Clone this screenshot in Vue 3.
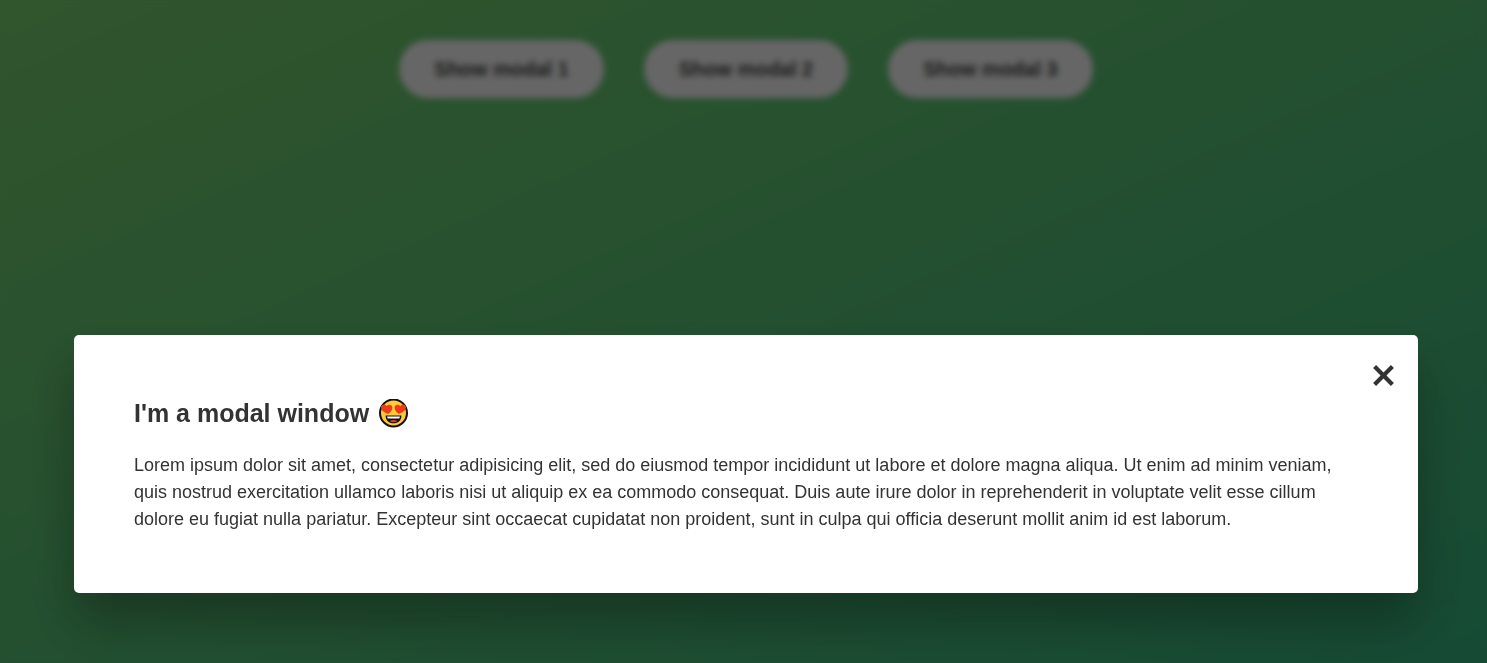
<script setup>
import { ref } from 'vue'

const open = ref(true)
const modals = [1, 2, 3]
</script>

<template>
  <main class="page">
    <div class="triggers">
      <button v-for="n in modals" :key="n" class="trigger" type="button" @click="open = true">
        Show modal {{ n }}
      </button>
    </div>

    <div v-if="open" class="overlay">
      <section class="modal" role="dialog" aria-modal="true" aria-labelledby="modal-title">
        <button class="close" type="button" aria-label="Close" @click="open = false">
          <svg viewBox="0 0 25 25" width="25" height="25" aria-hidden="true">
            <path d="M3.6 3.6 21.4 21.4M21.4 3.6 3.6 21.4" fill="none" stroke="#333" stroke-width="4.2" />
          </svg>
        </button>
        <h1 id="modal-title" class="title">
          I'm a modal window
          <svg class="emoji" viewBox="0 0 30 30" width="30" height="30" role="img" aria-label="Heart eyes">
            <circle cx="15.5" cy="14" r="13.5" fill="#ffc83d" stroke="#111" stroke-width="2" />
            <path d="M10 15C6.2 13.6 3.2 11.4 3 8.6 2.8 5.6 6.8 4.4 8.6 7.2 10.4 4.6 14.5 5.4 14.4 8.8 14.3 11.4 12.4 13.4 10 15Z" fill="#f03a17" />
            <path d="M21 15C24.8 13.6 27.8 11.4 28 8.6 28.2 5.6 24.2 4.4 22.4 7.2 20.6 4.6 16.5 5.4 16.6 8.8 16.7 11.4 18.6 13.4 21 15Z" fill="#f03a17" />
            <path d="M7.6 16.4H23.4C23.4 21.4 20 24.2 15.5 24.2S7.6 21.4 7.6 16.4Z" fill="#111" />
            <path d="M9 17.4H22L21.3 19.6H9.7Z" fill="#fff" />
            <path d="M11.5 22.1Q15.5 19.8 19.5 22.1 15.5 24.6 11.5 22.1Z" fill="#f03a17" />
          </svg>
        </h1>
        <p class="copy">
          Lorem ipsum dolor sit amet, consectetur adipisicing elit, sed do eiusmod tempor
          incididunt ut labore et dolore magna aliqua. Ut enim ad minim veniam, quis nostrud
          exercitation ullamco laboris nisi ut aliquip ex ea commodo consequat. Duis aute irure
          dolor in reprehenderit in voluptate velit esse cillum dolore eu fugiat nulla pariatur.
          Excepteur sint occaecat cupidatat non proident, sunt in culpa qui officia deserunt
          mollit anim id est laborum.
        </p>
      </section>
    </div>
  </main>
</template>

<style>
body {
  margin: 0;
}
</style>

<style scoped>
.page {
  box-sizing: border-box;
  min-height: 100vh;
  padding: 40px 0 0 5px;
  background: linear-gradient(to top left, #28b487 -22%, #7dd56f 102%);
  font-family: Arial, "Liberation Sans", sans-serif;
  color: #333;
}

.triggers {
  display: flex;
  justify-content: center;
  gap: 40px;
}

.trigger {
  padding: 17px 35px;
  border: none;
  border-radius: 100px;
  background: #fff;
  color: #444;
  font: inherit;
  font-size: 20px;
  font-weight: 600;
  line-height: 24px;
  cursor: pointer;
}

.overlay {
  position: fixed;
  inset: 0;
  box-sizing: border-box;
  display: flex;
  flex-direction: column;
  justify-content: flex-end;
  padding: 0 69px 70px 74px;
  background: rgba(0, 0, 0, 0.6);
  backdrop-filter: blur(3px);
}

.modal {
  position: relative;
  padding: 60px;
  border-radius: 5px;
  background: #fff;
  box-shadow: 0 30px 50px rgba(0, 0, 0, 0.3);
}

.close {
  position: absolute;
  top: 28px;
  right: 22px;
  display: flex;
  padding: 0;
  border: none;
  background: none;
  cursor: pointer;
}

.title {
  display: flex;
  align-items: center;
  gap: 9px;
  margin: 0 0 20px;
  font-size: 25px;
  line-height: 37px;
}

.copy {
  margin: 0;
  font-size: 18px;
  line-height: 27px;
}
</style>
